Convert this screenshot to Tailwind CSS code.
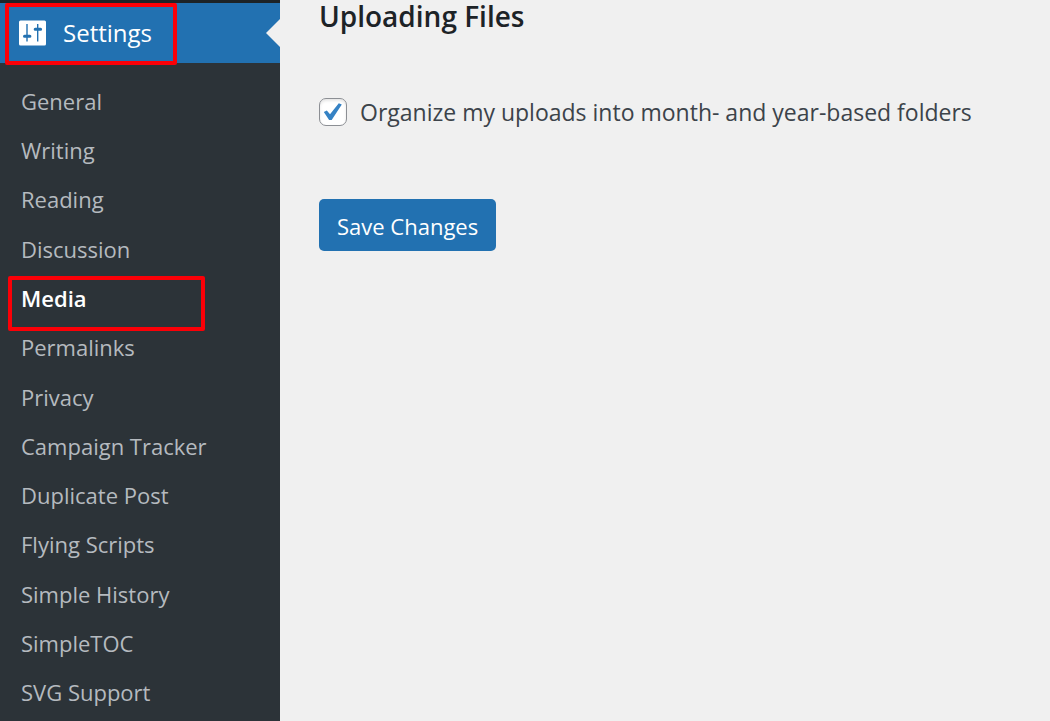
<!DOCTYPE html>
<html lang="en">
<head>
    <meta charset="UTF-8">
    <meta name="viewport" content="width=device-width, initial-scale=1.0">
    <title>Media Settings</title>
    <script src="https://cdn.jsdelivr.net/npm/@tailwindcss/browser@4"></script>
</head>
<body class="flex min-h-screen bg-[#f0f0f0] font-['Open_Sans','Noto_Sans',sans-serif]">

    <!-- Admin menu -->
    <nav class="flex w-[280px] shrink-0 flex-col border-t-3 border-[#1d2327] bg-[#2c3338]">
        <a href="#" class="relative flex h-[60px] items-center gap-4 bg-[#2271b1] pl-[19px] text-2xl text-white">
            <svg class="h-[26px] w-7" viewBox="0 0 28 26" aria-hidden="true">
                <rect x="0" y="0.5" width="27" height="25" rx="1.5" fill="#fff"/>
                <path d="M8 4v17.500M18.700 4v17.500" stroke="#2271b1" stroke-width="1.4"/>
                <path d="M5.500 16.200h5.400M16.200 9.200h5.400" stroke="#2271b1" stroke-width="3" stroke-linecap="round"/>
            </svg>
            Settings
            <!-- current item arrow -->
            <svg class="absolute right-0 h-7 w-[14px]" viewBox="0 0 14 28" aria-hidden="true">
                <path d="M14 0v28L0 14z" fill="#f0f0f0"/>
            </svg>
            <span class="absolute top-0 left-[5px] h-[62px] w-[172px] rounded-xs border-4 border-[#fb0007]"></span>
        </a>

        <ul class="flex flex-1 flex-col pt-[13px] pb-1 text-[22px] leading-8 text-[#b5babf]">
            <li class="flex flex-1 items-center pl-[21px]"><a href="#">General</a></li>
            <li class="flex flex-1 items-center pl-[21px]"><a href="#">Writing</a></li>
            <li class="flex flex-1 items-center pl-[21px]"><a href="#">Reading</a></li>
            <li class="flex flex-1 items-center pl-[21px]"><a href="#">Discussion</a></li>
            <li class="relative flex flex-1 items-center pl-[21px]">
                <a href="#" class="font-semibold text-white" aria-current="page">Media</a>
                <span class="absolute top-[3px] left-2 h-[55px] w-[197px] rounded-xs border-4 border-[#fb0007]"></span>
            </li>
            <li class="flex flex-1 items-center pl-[21px]"><a href="#">Permalinks</a></li>
            <li class="flex flex-1 items-center pl-[21px]"><a href="#">Privacy</a></li>
            <li class="flex flex-1 items-center pl-[21px]"><a href="#">Campaign Tracker</a></li>
            <li class="flex flex-1 items-center pl-[21px]"><a href="#">Duplicate Post</a></li>
            <li class="flex flex-1 items-center pl-[21px]"><a href="#">Flying Scripts</a></li>
            <li class="flex flex-1 items-center pl-[21px]"><a href="#">Simple History</a></li>
            <li class="flex flex-1 items-center pl-[21px]"><a href="#">SimpleTOC</a></li>
            <li class="flex flex-1 items-center pl-[21px]"><a href="#">SVG Support</a></li>
        </ul>
    </nav>

    <!-- Settings form -->
    <main class="flex-1 pl-[39px]">
        <form>
            <h2 class="text-[28px] leading-8 font-semibold text-[#1d2327]">Uploading Files</h2>

            <div class="mt-16 flex h-8 items-center gap-[13px]">
                <span class="relative h-7 w-7">
                    <input type="checkbox" id="uploads_folders" checked class="block h-7 w-7 appearance-none rounded-[7px] border border-[#8c8f94] bg-white shadow-[inset_0_2px_3px_rgba(0,0,0,0.1)]">
                    <svg class="pointer-events-none absolute inset-0 h-7 w-7" viewBox="0 0 28 28" aria-hidden="true">
                        <path d="M4.800 14l3-1.600 3.200 3.800L19.800 5.300l3 1.200L12.700 22h-2.600z" fill="#3582c4"/>
                    </svg>
                </span>
                <label for="uploads_folders" class="text-[23px] leading-8 text-[#3c434a]">Organize my uploads into month- and year-based folders</label>
            </div>

            <button type="submit" class="mt-[71px] h-[52px] rounded-[5px] bg-[#2271b1] px-[18px] pt-0.5 text-[22px] text-white">Save Changes</button>
        </form>
    </main>

</body>
</html>
